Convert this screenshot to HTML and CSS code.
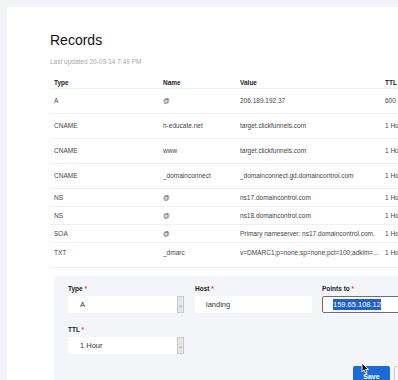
FILE: index.html
```html
<!DOCTYPE html>
<html lang="en">
<head>
    <meta charset="UTF-8">
    <meta name="viewport" content="width=device-width, initial-scale=1.0">
    <title>DNS Records</title>
    <link rel="stylesheet" href="styles.css">
</head>
<body>

<div class="panel">
    <h1>Records</h1>
    <p class="updated">Last updated 20-09-14 7:49 PM</p>

    <table class="records">
        <thead>
            <tr>
                <th class="col-type">Type</th>
                <th class="col-name">Name</th>
                <th class="col-value">Value</th>
                <th>TTL</th>
            </tr>
        </thead>
        <tbody>
            <tr class="tall"><td>A</td><td>@</td><td>206.189.192.37</td><td>600 seconds</td></tr>
            <tr class="tall"><td>CNAME</td><td>h-educate.net</td><td>target.clickfunnels.com</td><td>1 Hour</td></tr>
            <tr class="tall"><td>CNAME</td><td>www</td><td>target.clickfunnels.com</td><td>1 Hour</td></tr>
            <tr class="tall"><td>CNAME</td><td>_domainconnect</td><td>_domainconnect.gd.domaincontrol.com</td><td>1 Hour</td></tr>
            <tr><td>NS</td><td>@</td><td>ns17.domaincontrol.com</td><td>1 Hour</td></tr>
            <tr><td>NS</td><td>@</td><td>ns18.domaincontrol.com</td><td>1 Hour</td></tr>
            <tr><td>SOA</td><td>@</td><td>Primary nameserver: ns17.domaincontrol.com.</td><td>1 Hour</td></tr>
            <tr class="last"><td>TXT</td><td>_dmarc</td><td>v=DMARC1;p=none;sp=none;pct=100;adkim=...</td><td>1 Hour</td></tr>
        </tbody>
    </table>

    <div class="edit-form">
        <div class="form-row">
            <div class="field">
                <label>Type <span class="req">*</span></label>
                <div class="select"><span>A</span><i class="arrow">&#8964;</i></div>
            </div>
            <div class="field">
                <label>Host <span class="req">*</span></label>
                <div class="input">landing</div>
            </div>
            <div class="field">
                <label>Points to <span class="req">*</span></label>
                <div class="input focused"><span class="selected">159.65.108.12</span></div>
            </div>
        </div>
        <div class="form-row">
            <div class="field">
                <label>TTL <span class="req">*</span></label>
                <div class="select"><span>1 Hour</span><i class="arrow">&#8964;</i></div>
            </div>
        </div>
        <div class="actions">
            <button class="btn-save">Save</button>
            <button class="btn-cancel">Cancel</button>
            <!-- mouse pointer over the button -->
            <svg class="cursor" width="9" height="13" viewBox="0 0 9 13">
                <path d="M1 1 L1 10 L3.2 8 L4.8 11.6 L6.2 11 L4.7 7.5 L7.6 7.5 Z" fill="#111" stroke="#fff" stroke-width="0.9"/>
            </svg>
        </div>
    </div>
</div>

</body>
</html>
```

FILE: styles.css
```css
html, body {
    overflow: hidden;
}

body {
    margin: 0;
    padding: 7px 0 0 7px;
    height: 380px;
    box-sizing: border-box;
    background-color: #f3f4f8;
    font-family: "Liberation Sans", Arial, sans-serif;
    color: #333;
}

.panel {
    background-color: #fff;
    width: 560px;
    height: 420px;
    padding: 0 0 0 43px;
    box-sizing: border-box;
}

.panel h1 {
    margin: 0;
    padding-top: 23px;
    font-size: 14px;
    font-weight: normal;
    color: #111;
    line-height: 20px;
}

.updated {
    margin: 7px 0 0;
    font-size: 6.5px;
    color: #a8a8ad;
    line-height: 9px;
}

/* Tabela de registros */
.records {
    border-collapse: collapse;
    width: 460px;
    margin-top: 6px;
    font-size: 6.5px;
}

.records th,
.records td {
    text-align: left;
    padding: 0 0 0 4px;
    white-space: nowrap;
}

.records th {
    height: 12px;
    padding-top: 4px;
    color: #222;
    font-weight: bold;
    border-bottom: 1px solid #eef0f3;
}

.records td {
    height: 17px;
    color: #444;
    border-bottom: 1px solid #eef0f3;
}

.records tr.tall td {
    height: 23px;
    padding-bottom: 1px;
}

.records tr.last td {
    height: 19px;
    padding-bottom: 5px;
}

.col-type { width: 105px; }
.col-name { width: 73px; }
.col-value { width: 141px; }

/* Formulário de edição */
.edit-form {
    margin: 8px 0 0 4px;
    background-color: #f4f5f8;
    padding: 8px 0 0 14px;
    height: 140px;
}

.form-row {
    display: flex;
    gap: 10px;
    margin-bottom: 12px;
}

.field {
    width: 117px;
}

.field label {
    display: block;
    font-size: 6.5px;
    font-weight: bold;
    color: #222;
    line-height: 10px;
    margin-bottom: 2px;
}

.req {
    color: #e0453a;
}

.select,
.input {
    height: 17px;
    background-color: #fff;
    font-size: 7.5px;
    color: #333;
    display: flex;
    align-items: center;
    box-sizing: border-box;
}

.select {
    width: 116px;
    justify-content: space-between;
    padding-left: 12px;
}

.select .arrow {
    width: 7px;
    height: 17px;
    box-sizing: border-box;
    background-color: #e6e6e8;
    border: 1px solid #c9c9cc;
    font-style: normal;
    font-size: 6px;
    color: #888;
    display: flex;
    align-items: center;
    justify-content: center;
}

.input {
    padding-left: 11px;
}

.input.focused {
    width: 90px;
    border: 1px solid #6d6f73;
    border-radius: 2px;
    padding-left: 10px;
}

.selected {
    background-color: #1f5fd2;
    color: #fff;
    padding: 1px 0;
}

.actions {
    position: relative;
    display: flex;
    gap: 4px;
    margin: 8px 0 0 285px;
}

.btn-save {
    width: 37px;
    height: 18px;
    border: none;
    border-radius: 2px 2px 0 0;
    background-color: #1b6ad8;
    color: #fff;
    font-family: inherit;
    font-size: 7px;
    font-weight: bold;
    padding: 3px 0 0;
}

.btn-cancel {
    width: 40px;
    height: 18px;
    border: 1px solid #c9ccd2;
    border-radius: 2px;
    background-color: #fff;
    color: #fff;
    font-size: 7px;
}

.cursor {
    position: absolute;
    left: 8px;
    top: -4px;
}
```
